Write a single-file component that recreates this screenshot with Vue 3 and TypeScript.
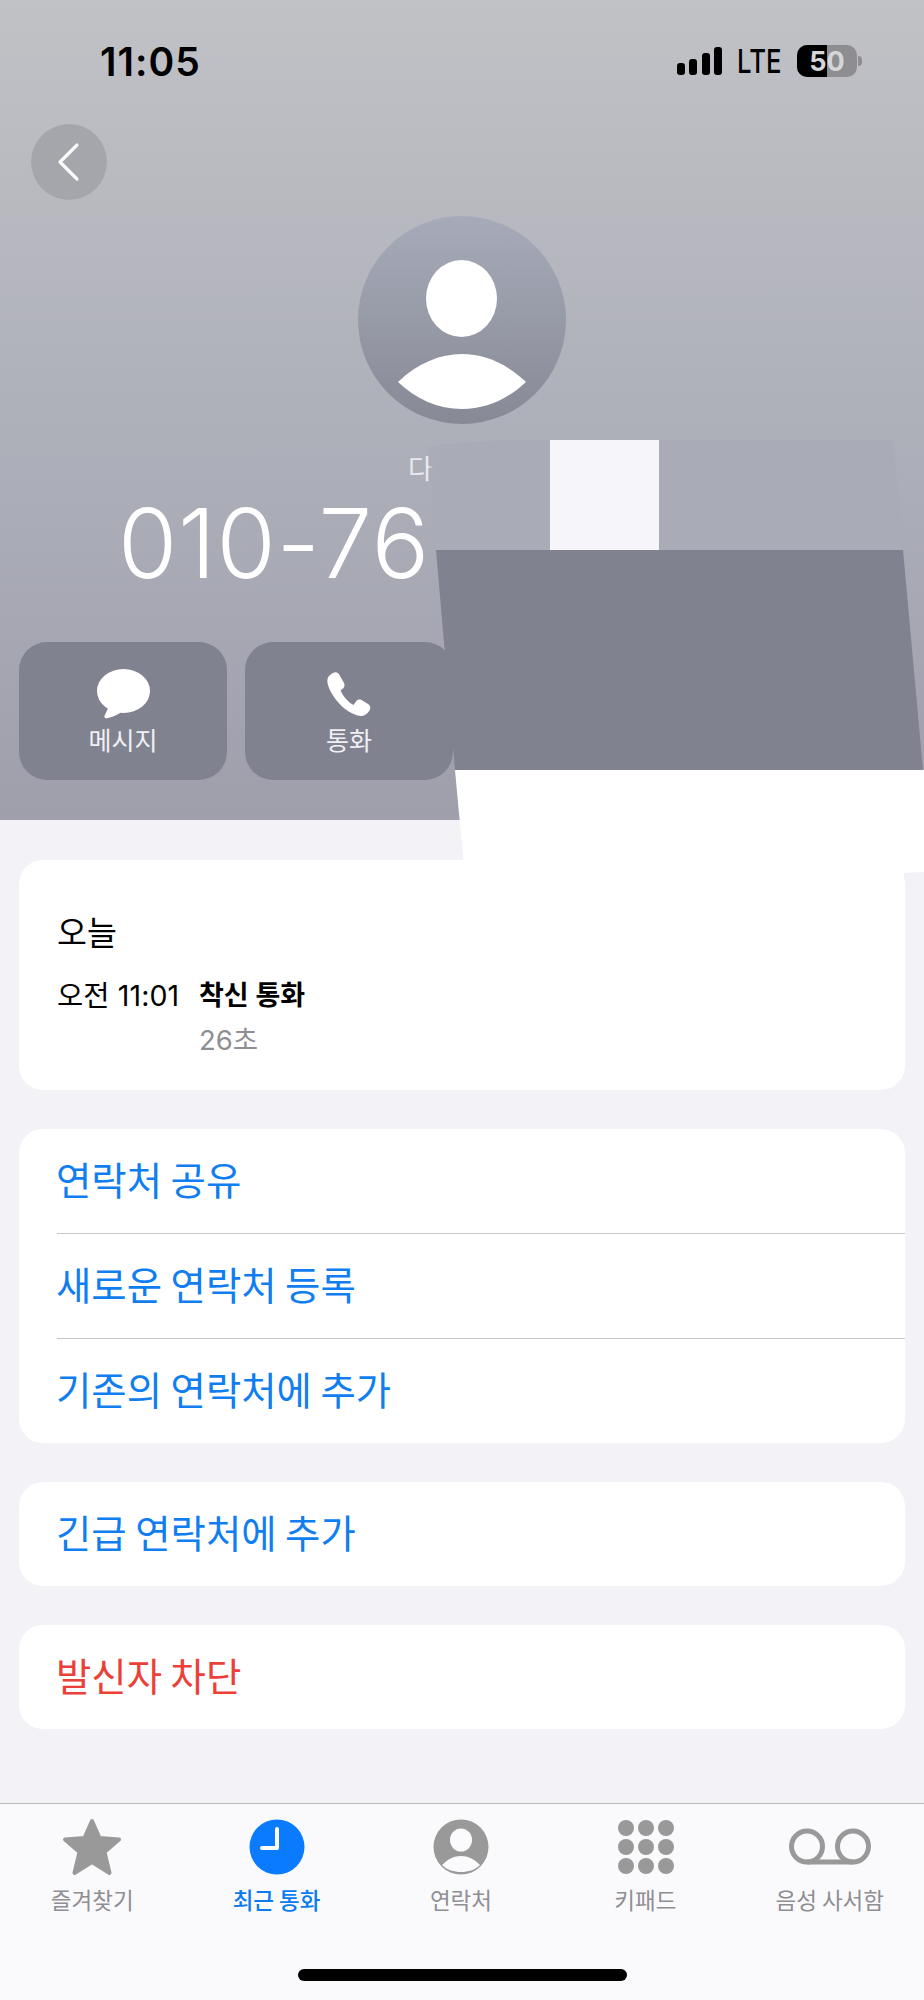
<script setup lang="ts">
interface Row { label: string }
const actionRows: Row[] = [
  { label: '연락처 공유' },
  { label: '새로운 연락처 등록' },
  { label: '기존의 연락처에 추가' },
]
const signalHeights: number[] = [12, 16, 22, 28]
const keypadDots: [number, number][] = []
for (const y of [8, 27, 46]) for (const x of [8, 28, 48]) keypadDots.push([x, y])
</script>

<template>
  <div class="screen">
    <header class="hero">
      <div class="status">
        <span class="time">11:05</span>
        <div class="status-right">
          <div class="signal">
            <i v-for="h in signalHeights" :key="h" :style="{ height: h + 'px' }"></i>
          </div>
          <span class="lte">LTE</span>
          <div class="battery">
            <div class="battery-fill"></div>
            <span class="battery-num">50</span>
          </div>
          <span class="nub"></span>
        </div>
      </div>

      <button class="back" aria-label="뒤로">
        <svg width="24" height="40" viewBox="0 0 24 40">
          <path d="M21 3 L4 20 L21 37" fill="none" stroke="#fafafa" stroke-width="3.2" stroke-linecap="round" stroke-linejoin="round" />
        </svg>
      </button>

      <svg class="avatar" width="208" height="208" viewBox="0 0 208 208">
        <defs>
          <linearGradient id="av" x1="0" y1="0" x2="0" y2="1">
            <stop offset="0" stop-color="#a7abb9" />
            <stop offset="1" stop-color="#878995" />
          </linearGradient>
        </defs>
        <circle cx="104" cy="104" r="104" fill="url(#av)" />
        <ellipse cx="103.5" cy="82.5" rx="35.5" ry="38.5" fill="#fff" />
        <path d="M40 166 C60 147 82 138 104 138 C126 138 148 147 168 166 C150 183 128 193 104 193 C80 193 58 183 40 166 Z" fill="#fff" />
      </svg>

      <div class="name">다</div>
      <div class="number">010-76</div>

      <div class="actions">
        <div class="action">
          <svg class="icon-msg" width="53" height="50" viewBox="0 0 53 50">
            <ellipse cx="26.5" cy="22" rx="26.5" ry="22" fill="#fff" />
            <path d="M12 35 C11 41 8 45 7.5 47 C7 49.5 9 49.5 11 49 C16 48 21 45.500 26 42 Z" fill="#fff" />
          </svg>
          <span>메시지</span>
        </div>
        <div class="action">
          <svg class="icon-phone" width="44" height="45" viewBox="0 0 44 45">
            <path d="M6 1 C9 -0.5 11 0.5 12.500 3 L17 11 C18 13 17.500 15 16 16.500 L13.500 18.500 C15 22 17.500 25.500 20.500 28.500 C22.500 30.500 24.500 32 26.500 33 L29 29.500 C30.500 27.500 32.500 27 34.500 28 L41 32 C43.500 33.500 44 36 42.500 38.500 C40 43 35.500 45 30.500 43.500 C22 41 13 34 7 25 C2 17.500 -1 10 1 5.500 C2 3.500 4 2 6 1 Z" fill="#fff" />
          </svg>
          <span>통화</span>
        </div>
      </div>
    </header>

    <main class="content">
      <section class="card log">
        <div class="log-title">오늘</div>
        <div class="log-row">
          <span class="log-time">오전 11:01</span>
          <div class="log-detail">
            <div class="log-type">착신 통화</div>
            <div class="log-dur">26초</div>
          </div>
        </div>
      </section>

      <section class="card">
        <div v-for="r in actionRows" :key="r.label" class="row">{{ r.label }}</div>
      </section>

      <section class="card">
        <div class="row">긴급 연락처에 추가</div>
      </section>

      <section class="card">
        <div class="row danger">발신자 차단</div>
      </section>
    </main>

    <nav class="tabs">
      <div class="tab">
        <div class="tab-icon">
          <svg width="60" height="58" viewBox="0 0 60 58">
            <polygon points="30,3 37.500,20 57,21.500 42.500,34 47.500,55 30,44 12.500,55 17.500,34 3,21.500 22.500,20" fill="#999" stroke="#999" stroke-width="4" stroke-linejoin="round" />
          </svg>
        </div>
        <span>즐겨찾기</span>
      </div>
      <div class="tab active">
        <div class="tab-icon">
          <svg width="56" height="56" viewBox="0 0 56 56">
            <circle cx="28" cy="28" r="27.500" fill="#0a7bff" />
            <path d="M28 10 V29 H13" fill="none" stroke="#fff" stroke-width="4" stroke-linecap="round" stroke-linejoin="round" />
          </svg>
        </div>
        <span>최근 통화</span>
      </div>
      <div class="tab">
        <div class="tab-icon">
          <svg width="56" height="56" viewBox="0 0 56 56">
            <circle cx="28" cy="28" r="27.500" fill="#999" />
            <ellipse cx="28" cy="21" rx="11" ry="11.500" fill="#fbfbfd" />
            <path d="M9 46 C15 40 21 37 28 37 C35 37 41 40 47 46 C42 51 35 53 28 53 C21 53 14 51 9 46 Z" fill="#fbfbfd" />
          </svg>
        </div>
        <span>연락처</span>
      </div>
      <div class="tab">
        <div class="tab-icon">
          <svg class="keypad" width="56" height="54" viewBox="0 0 56 54">
            <circle v-for="d in keypadDots" :key="d[0] + '-' + d[1]" :cx="d[0]" :cy="d[1]" r="8" fill="#999" />
          </svg>
        </div>
        <span>키패드</span>
      </div>
      <div class="tab">
        <div class="tab-icon">
          <svg width="82" height="38" viewBox="0 0 82 38">
            <circle cx="18" cy="18.500" r="15.500" fill="none" stroke="#999" stroke-width="5" />
            <circle cx="64" cy="18.500" r="15.500" fill="none" stroke="#999" stroke-width="5" />
            <path d="M18 34 H64" stroke="#999" stroke-width="5" />
          </svg>
        </div>
        <span>음성 사서함</span>
      </div>
      <div class="home"></div>
    </nav>

    <svg class="redact" width="924" height="2000" viewBox="0 0 924 2000">
      <polygon points="428,447 441,445 437,550 436,550" fill="#a9abb7" opacity="0.6" />
      <polygon points="440,445 500,440 893,440 903,550 436,550" fill="#a9abb7" />
      <rect x="550" y="440" width="109" height="110" fill="#f6f6fa" />
      <polygon points="436,550 903,550 923,770 455,770" fill="#80828f" />
      <polygon points="455,770 924,770 924,872 904,873 904,900 467,900" fill="#fff" />
    </svg>
  </div>
</template>

<style scoped>
.screen {
  position: relative;
  width: 924px;
  height: 2000px;
  overflow: hidden;
  display: flex;
  flex-direction: column;
  background: #f2f2f7;
  font-family: Inter, "Noto Sans CJK KR", sans-serif;
  color: #000;
}
.hero {
  height: 820px;
  flex: none;
  display: flex;
  flex-direction: column;
  background: linear-gradient(180deg, #c1c2c6 0%, #adafb9 54%, #9e9fab 100%);
}
.status {
  display: flex;
  justify-content: space-between;
  align-items: center;
  height: 36px;
  margin-top: 43px;
  padding: 0 62px 0 100px;
}
.time {
  font-size: 39px;
  font-weight: 600;
  letter-spacing: 1px;
}
.status-right {
  display: flex;
  align-items: center;
}
.signal {
  display: flex;
  align-items: flex-end;
  gap: 4.500px;
  height: 28px;
}
.signal i {
  display: block;
  width: 8px;
  border-radius: 3px;
  background: #000;
}
.lte {
  display: inline-block;
  width: 45px;
  margin-left: 15px;
  font-family: Inter, sans-serif;
  font-weight: 500;
  font-size: 33px;
  line-height: 36px;
  transform: scaleX(0.78);
  transform-origin: left center;
  white-space: nowrap;
}
.battery {
  position: relative;
  width: 60px;
  height: 32px;
  margin-left: 15px;
  border-radius: 10px;
  background: #8d8d92;
  overflow: hidden;
  display: flex;
  align-items: center;
  justify-content: center;
}
.battery-fill {
  position: absolute;
  left: 0;
  top: 0;
  bottom: 0;
  width: 30px;
  background: #000;
}
.battery-num {
  position: relative;
  font-size: 27px;
  font-weight: 700;
  color: #d6d6da;
}
.nub {
  width: 4px;
  height: 10px;
  margin-left: 1px;
  border-radius: 0 4px 4px 0;
  background: #8d8d92;
}
.back {
  width: 76px;
  height: 76px;
  margin: 45px 0 0 31px;
  padding: 0 3px 0 0;
  border: 0;
  border-radius: 50%;
  background: #a5a6ab;
  display: flex;
  align-items: center;
  justify-content: center;
}
.avatar {
  flex: none;
  margin: 16px 0 0 358px;
}
.name {
  margin: 29px 0 0 408px;
  height: 34px;
  font-size: 27px;
  line-height: 34px;
  color: #e9e9ef;
}
.number {
  margin: 6px 0 0 118px;
  height: 100px;
  font-size: 96px;
  line-height: 100px;
  font-weight: 350;
  letter-spacing: 0.7px;
  color: #fff;
}
.actions {
  display: flex;
  gap: 18px;
  margin: 48.500px 0 0 19px;
}
.action {
  width: 208px;
  height: 138px;
  border-radius: 28px;
  background: #80828f;
  display: flex;
  flex-direction: column;
  align-items: center;
  color: #f0f0f5;
  font-size: 25px;
  line-height: 34px;
}
.icon-msg {
  margin-top: 27px;
  margin-bottom: 5px;
}
.icon-phone {
  margin-top: 30px;
  margin-bottom: 7px;
}
.content {
  flex: 1;
  display: flex;
  flex-direction: column;
  gap: 39px;
  padding: 40px 19px 0;
}
.card {
  background: #fff;
  border-radius: 24px;
  overflow: hidden;
}
.log {
  box-sizing: border-box;
  height: 229.500px;
  padding: 54px 38px 0;
}
.log-title {
  font-size: 32.500px;
  line-height: 40px;
}
.log-row {
  display: flex;
  margin-top: 24px;
}
.log-time {
  width: 142px;
  font-size: 28.500px;
  letter-spacing: 0.1px;
  line-height: 36px;
  white-space: nowrap;
}
.log-type {
  font-size: 27px;
  line-height: 36px;
  font-weight: 600;
}
.log-dur {
  margin-top: 9px;
  font-size: 27.500px;
  line-height: 34px;
  color: #8e8e93;
}
.row {
  box-sizing: border-box;
  height: 104px;
  margin-left: 38px;
  padding-bottom: 6px;
  text-indent: -1px;
  display: flex;
  align-items: center;
  font-size: 38.400px;
  color: #107ef0;
  font-family: "Noto Sans CJK KR", sans-serif;
}
.row + .row {
  height: 105px;
  border-top: 1px solid #c8c8cb;
}
.danger {
  color: #eb4038;
}
.tabs {
  position: relative;
  flex: none;
  height: 197px;
  box-sizing: border-box;
  border-top: 1px solid #b8b8bd;
  background: #fafafc;
  display: grid;
  grid-template-columns: repeat(5, 184.400px);
  padding-top: 13px;
  align-content: start;
}
.tab {
  display: flex;
  flex-direction: column;
  align-items: center;
  font-size: 22.500px;
  line-height: 30px;
  color: #8e8e93;
  font-family: "Noto Sans CJK KR", sans-serif;
}
.tab-icon {
  height: 60px;
  display: flex;
  align-items: center;
  justify-content: center;
  margin-bottom: 7px;
}
.keypad {
  margin-left: 2px;
}
.tab.active {
  color: #0a7bf0;
  font-weight: 500;
}
.home {
  position: absolute;
  left: 298px;
  top: 165px;
  width: 329px;
  height: 12px;
  border-radius: 6px;
  background: #000;
}
.redact {
  position: absolute;
  left: 0;
  top: 0;
  pointer-events: none;
}
</style>
